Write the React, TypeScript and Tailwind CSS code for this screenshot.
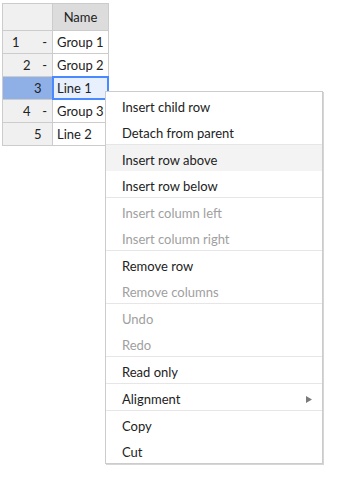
import React from "react";

const font = { fontFamily: "Lato, 'Liberation Sans', sans-serif" };

type Row = { n: number; pad: string; parent: boolean; name: string; selected?: boolean };

const rows: Row[] = [
  { n: 1, pad: "pl-[9px]", parent: true, name: "Group 1" },
  { n: 2, pad: "pl-[20px]", parent: true, name: "Group 2" },
  { n: 3, pad: "pl-[31px]", parent: false, name: "Line 1", selected: true },
  { n: 4, pad: "pl-[20px]", parent: true, name: "Group 3" },
  { n: 5, pad: "pl-[31px]", parent: false, name: "Line 2" },
];

type Item = { label: string; disabled?: boolean; hover?: boolean; sub?: boolean; sepAfter?: boolean };

const items: Item[] = [
  { label: "Insert child row" },
  { label: "Detach from parent", sepAfter: true },
  { label: "Insert row above", hover: true },
  { label: "Insert row below", sepAfter: true },
  { label: "Insert column left", disabled: true },
  { label: "Insert column right", disabled: true, sepAfter: true },
  { label: "Remove row" },
  { label: "Remove columns", disabled: true, sepAfter: true },
  { label: "Undo", disabled: true },
  { label: "Redo", disabled: true, sepAfter: true },
  { label: "Read only", sepAfter: true },
  { label: "Alignment", sub: true, sepAfter: true },
  { label: "Copy" },
  { label: "Cut" },
];

export default function App() {
  return (
    <div className="relative w-[350px] h-[480px] bg-white text-[13px] text-[#222]" style={font}>
      <div className="pl-[2px] pt-[3px]">
        <div className="inline-flex flex-col border-l border-t border-[#ccc]">
          <div className="flex">
            <div className="w-[50px] h-[27px] bg-[#f0f0f0] border-r border-b border-[#ccc]" />
            <div className="w-[56px] h-[27px] bg-[#dcdcdc] border-r border-b border-[#ccc] flex items-center justify-center pt-[1px]">
              Name
            </div>
          </div>
          {rows.map((r) => (
            <div key={r.n} className="flex">
              <div
                className={`w-[50px] h-[23px] border-r border-b border-[#ccc] flex items-center pt-[1px] ${r.pad} ${
                  r.selected ? "bg-[#8eb0e7]" : "bg-[#f0f0f0]"
                }`}
              >
                <span>{r.n}</span>
                {r.parent && <span className="ml-auto pr-[5px]">-</span>}
              </div>
              <div
                className={`relative w-[56px] h-[23px] border-r border-b border-[#ccc] flex items-center pl-[4px] pt-[1px] ${
                  r.selected ? "bg-[#e8effd]" : "bg-white"
                }`}
              >
                {r.name}
                {r.selected && (
                  <div className="absolute -left-[1px] -top-[1px] w-[57px] h-[24px] border-2 border-[#4b89ff]" />
                )}
              </div>
            </div>
          ))}
        </div>
      </div>

      <div className="absolute left-[105px] top-[91px] w-[218px] bg-white border border-[#ccc] shadow-[1px_1px_0_#d6d6d6] flex flex-col">
        {items.map((it) => (
          <React.Fragment key={it.label}>
            <div
              className={`h-[26px] flex items-center pl-[16px] pr-[8px] pt-[5px] ${
                it.hover ? "bg-[#f3f3f3]" : ""
              } ${it.disabled ? "text-[#a0a0a0]" : "text-[#222]"}`}
            >
              <span>{it.label}</span>
              {it.sub && (
                <svg className="ml-auto mr-[2px] -mt-[1px]" width="6" height="7" viewBox="0 0 6 7">
                  <path d="M0 0 L6 3.5 L0 7 Z" fill="#7a7a7a" />
                </svg>
              )}
            </div>
            {it.sepAfter && <div className="h-px bg-[#e6e6e6]" />}
          </React.Fragment>
        ))}
      </div>
    </div>
  );
}
